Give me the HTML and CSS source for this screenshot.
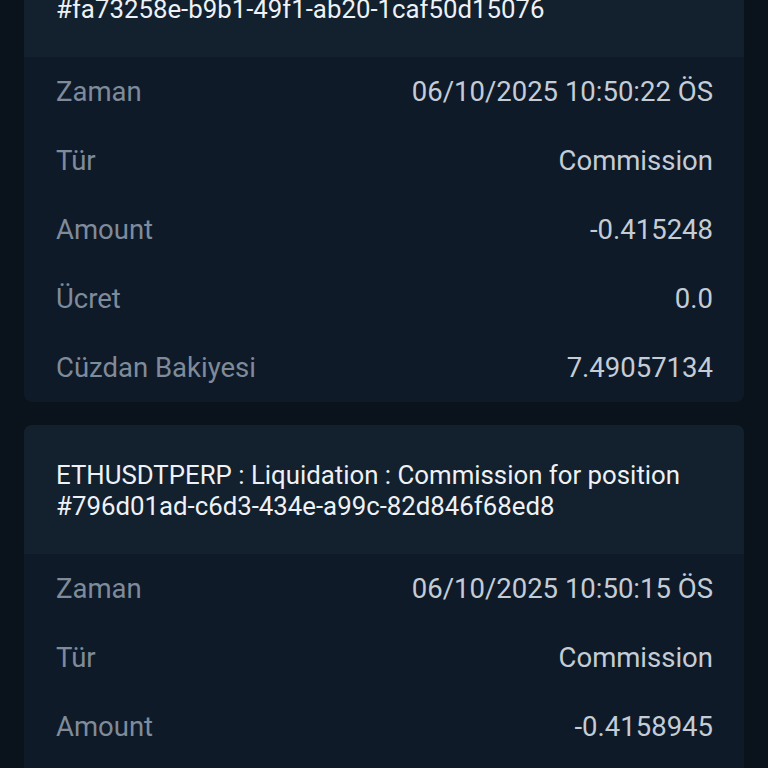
FILE: index.html
```html
<!DOCTYPE html>
<html lang="tr">
<head>
<meta charset="utf-8">
<link rel="stylesheet" href="styles.css">
</head>
<body>
<div class="list">
  <section class="card">
    <div class="card-head">ETHUSDTPERP : Liquidation : Commission for position #fa73258e-b9b1-49f1-ab20-1caf50d15076</div>
    <div class="card-body">
      <div class="row"><span class="label">Zaman</span><span class="value">06/10/2025 10:50:22 ÖS</span></div>
      <div class="row"><span class="label">Tür</span><span class="value">Commission</span></div>
      <div class="row"><span class="label">Amount</span><span class="value">-0.415248</span></div>
      <div class="row"><span class="label">Ücret</span><span class="value">0.0</span></div>
      <div class="row"><span class="label">Cüzdan Bakiyesi</span><span class="value">7.49057134</span></div>
    </div>
  </section>
  <section class="card">
    <div class="card-head">ETHUSDTPERP : Liquidation : Commission for position #796d01ad-c6d3-434e-a99c-82d846f68ed8</div>
    <div class="card-body">
      <div class="row"><span class="label">Zaman</span><span class="value">06/10/2025 10:50:15 ÖS</span></div>
      <div class="row"><span class="label">Tür</span><span class="value">Commission</span></div>
      <div class="row"><span class="label">Amount</span><span class="value">-0.4158945</span></div>
      <div class="row"><span class="label">Ücret</span><span class="value">0.0</span></div>
    </div>
  </section>
</div>
</body>
</html>
```

FILE: styles.css
```css
html, body {
  margin: 0;
  padding: 0;
  background: #0a131c;
  height: 768px;
  overflow: hidden;
}
body {
  font-family: Roboto, "Liberation Sans", sans-serif;
  font-size: 27.5px;
}
.list {
  margin-top: -72px;
  padding: 0 24px;
  display: flex;
  flex-direction: column;
  gap: 23px;
}
.card {
  border-radius: 8px;
  overflow: hidden;
  background: #0e1a28;
}
.card-head {
  background: #13202e;
  color: #eef1f5;
  font-size: 25.8px;
  line-height: 31px;
  padding: 35px 32px 32px;
  height: 62px;
}
.row {
  height: 69px;
  display: flex;
  align-items: center;
  justify-content: space-between;
  padding: 0 31px 0 32px;
}
.label {
  color: #7f8b9a;
}
.value {
  color: #c4ccd6;
}
```
